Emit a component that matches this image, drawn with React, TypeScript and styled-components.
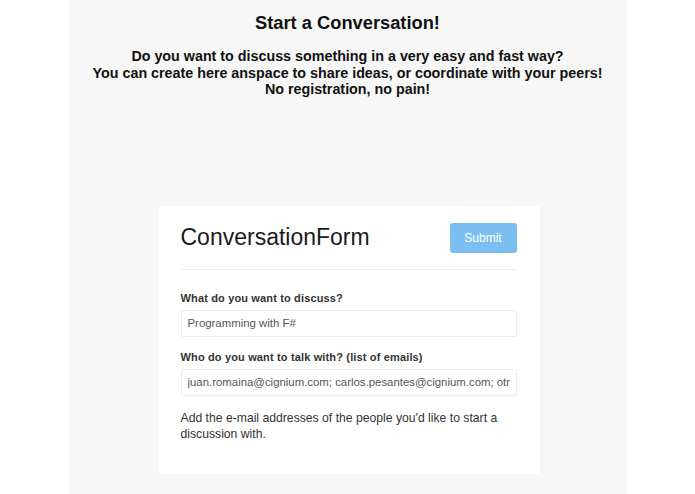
import React from 'react';
import styled, { createGlobalStyle } from 'styled-components';

const GlobalStyle = createGlobalStyle`
    html, body {
        margin: 0;
        padding: 0;
        background-color: #fff;
        font-family: "Liberation Sans", Arial, sans-serif;
    }
`;

const Page = styled.div`
    width: 558px;
    min-height: 494px;
    margin: 0 auto;
    padding: 12px 0 22px;
    box-sizing: border-box;
    background-color: #f7f7f7;
    color: #111;
`;

const Heading = styled.h1`
    margin: 0;
    font-size: 18.3px;
    line-height: 21px;
    font-weight: bold;
    text-align: center;
`;

const Intro = styled.p`
    margin: 15px 0 0;
    font-size: 14.3px;
    line-height: 16.5px;
    font-weight: bold;
    text-align: center;
    white-space: nowrap;
`;

const Card = styled.div`
    width: 382px;
    margin: 108px 0 0 89px;
    padding: 17px 23px 32px;
    box-sizing: border-box;
    background-color: #fff;
    border-radius: 3px;
`;

const CardHeader = styled.div`
    display: flex;
    align-items: center;
    justify-content: space-between;
    height: 30px;
`;

const Title = styled.h2`
    margin: 0;
    font-size: 23px;
    font-weight: normal;
    color: #1a1a1a;
`;

const SubmitButton = styled.button`
    width: 67px;
    height: 30px;
    border: none;
    border-radius: 3px;
    background-color: #7bbff0;
    color: #fff;
    font-family: inherit;
    font-size: 12px;
    cursor: default;
`;

const Divider = styled.hr`
    margin: 16px 0 0;
    border: none;
    border-top: 1px solid #eeeeee;
`;

const Field = styled.div<{ $first?: boolean }>`
    display: flex;
    flex-direction: column;
    gap: 4px;
    margin-top: ${({ $first }) => ($first ? '21px' : '13px')};
`;

const Label = styled.label`
    font-size: 11px;
    line-height: 15px;
    font-weight: bold;
    color: #333;
    letter-spacing: 0.15px;
`;

const TextInput = styled.input`
    height: 27px;
    padding: 0 6px;
    box-sizing: border-box;
    border: 1px solid #ececec;
    border-radius: 2px;
    font-family: inherit;
    font-size: 11.4px;
    color: #555;
    background-color: #fff;
    outline: none;
`;

const Help = styled.p`
    margin: 14px 0 0;
    font-size: 12.2px;
    line-height: 16px;
    color: #333;
`;

const App = () => {
    return (
        <>
            <GlobalStyle />
            <Page>
                <Heading>Start a Conversation!</Heading>
                <Intro>
                    Do you want to discuss something in a very easy and fast way?
                    <br />
                    You can create here anspace to share ideas, or coordinate with your peers!
                    <br />
                    No registration, no pain!
                </Intro>
                <Card>
                    <CardHeader>
                        <Title>ConversationForm</Title>
                        <SubmitButton type="button">Submit</SubmitButton>
                    </CardHeader>
                    <Divider />
                    <Field $first>
                        <Label>What do you want to discuss?</Label>
                        <TextInput defaultValue="Programming with F#" />
                    </Field>
                    <Field>
                        <Label>Who do you want to talk with? (list of emails)</Label>
                        <TextInput defaultValue="juan.romaina@cignium.com; carlos.pesantes@cignium.com; otro@cignium.com" />
                    </Field>
                    <Help>Add the e-mail addresses of the people you'd like to start a discussion with.</Help>
                </Card>
            </Page>
        </>
    );
};

export default App;
